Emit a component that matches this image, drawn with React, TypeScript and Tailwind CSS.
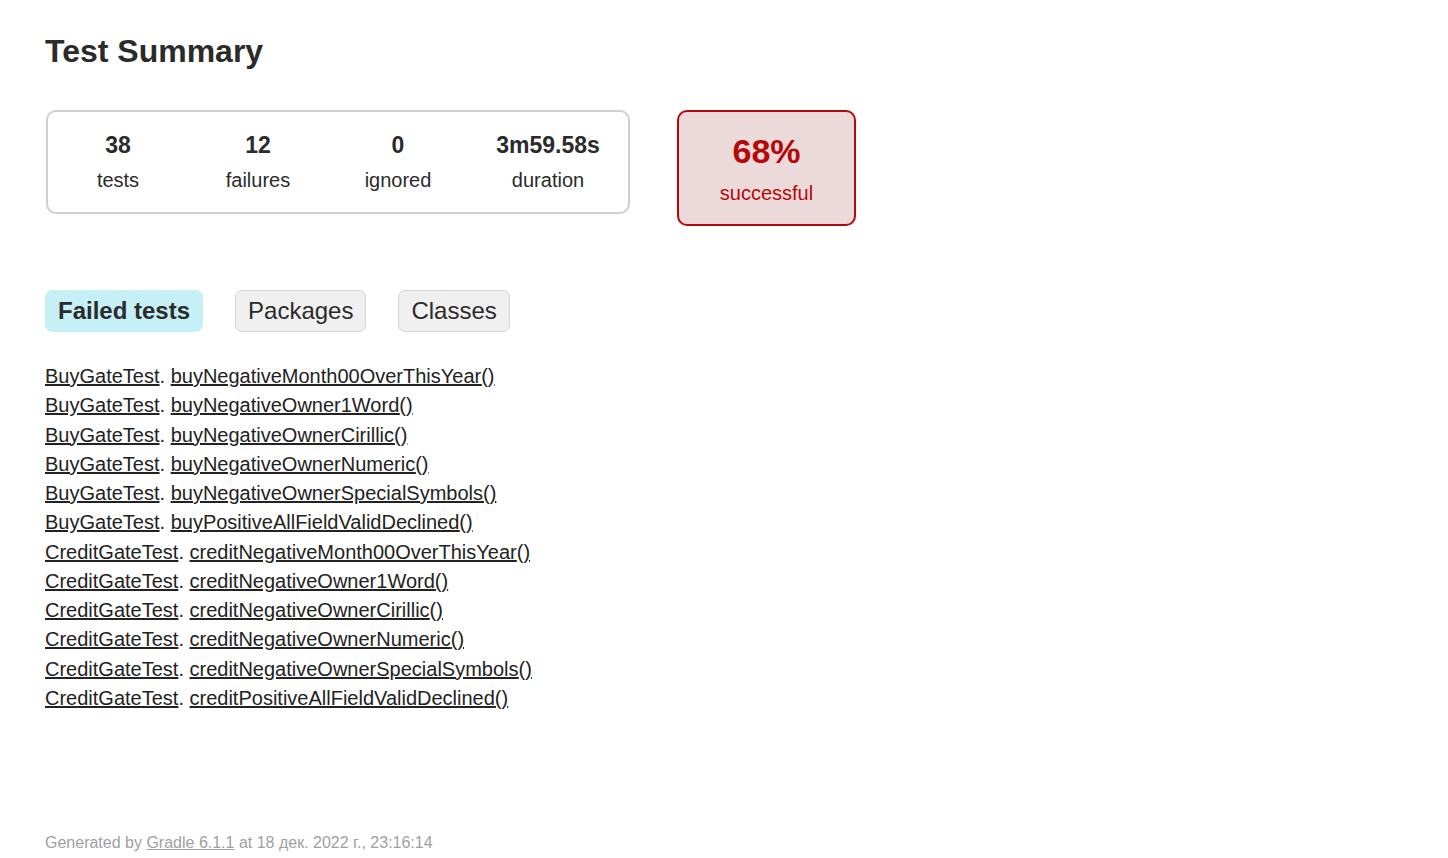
const failed = [
  ["BuyGateTest", "buyNegativeMonth00OverThisYear"],
  ["BuyGateTest", "buyNegativeOwner1Word"],
  ["BuyGateTest", "buyNegativeOwnerCirillic"],
  ["BuyGateTest", "buyNegativeOwnerNumeric"],
  ["BuyGateTest", "buyNegativeOwnerSpecialSymbols"],
  ["BuyGateTest", "buyPositiveAllFieldValidDeclined"],
  ["CreditGateTest", "creditNegativeMonth00OverThisYear"],
  ["CreditGateTest", "creditNegativeOwner1Word"],
  ["CreditGateTest", "creditNegativeOwnerCirillic"],
  ["CreditGateTest", "creditNegativeOwnerNumeric"],
  ["CreditGateTest", "creditNegativeOwnerSpecialSymbols"],
  ["CreditGateTest", "creditPositiveAllFieldValidDeclined"],
];

const counters = [
  { value: "38", label: "tests", width: "w-[140px]" },
  { value: "12", label: "failures", width: "w-[140px]" },
  { value: "0", label: "ignored", width: "w-[140px]" },
  { value: "3m59.58s", label: "duration", width: "w-[160px]" },
];

export default function App() {
  return (
    <div className="min-h-screen bg-white px-[45px] pt-[32px] text-[#2b2b2b] font-['Liberation_Sans',Arial,sans-serif]">
      <h1 className="text-[32px] leading-[38px] font-bold">Test Summary</h1>

      <div className="mt-[40px] flex items-start gap-[47px]">
        <div className="ml-[1px] flex rounded-[10px] border-2 border-[#d0d0d0] py-[20px]">
          {counters.map((c) => (
            <div key={c.label} className={`${c.width} text-center`}>
              <div className="text-[23px] leading-[26px] font-bold">{c.value}</div>
              <div className="mt-[11px] text-[20px] leading-[23px]">{c.label}</div>
            </div>
          ))}
        </div>

        <div className="w-[179px] rounded-[10px] border-2 border-[#b60808] bg-[#ecdada] pt-[20px] pb-[19px] text-center text-[#b60808]">
          <div className="text-[34px] leading-[39px] font-bold">68%</div>
          <div className="mt-[11px] text-[20px] leading-[23px]">successful</div>
        </div>
      </div>

      <div className="mt-[64px] flex gap-[32px] text-[24px] leading-[26px]">
        <div className="rounded-[7px] border border-[#c5f0f5] bg-[#c5f0f5] px-[12px] py-[7px] font-bold">Failed tests</div>
        <div className="rounded-[7px] border border-[#d4d4d4] bg-[#f0f0f0] px-[12px] py-[7px]">Packages</div>
        <div className="rounded-[7px] border border-[#d4d4d4] bg-[#f0f0f0] px-[12px] py-[7px]">Classes</div>
      </div>

      <ul className="mt-[33px] text-[20px] leading-[23px] text-[#222]">
        {failed.map(([cls, test]) => (
          <li key={test} className="mb-[6.25px]">
            <a href="#" className="underline">{cls}</a>.{" "}
            <a href="#" className="underline">{test}()</a>
          </li>
        ))}
      </ul>

      <div className="mt-[124px] text-[16px] leading-[18px] text-[#a0a0a0]">
        Generated by <a href="#" className="underline">Gradle 6.1.1</a> at 18 дек. 2022 г., 23:16:14
      </div>
    </div>
  );
}
